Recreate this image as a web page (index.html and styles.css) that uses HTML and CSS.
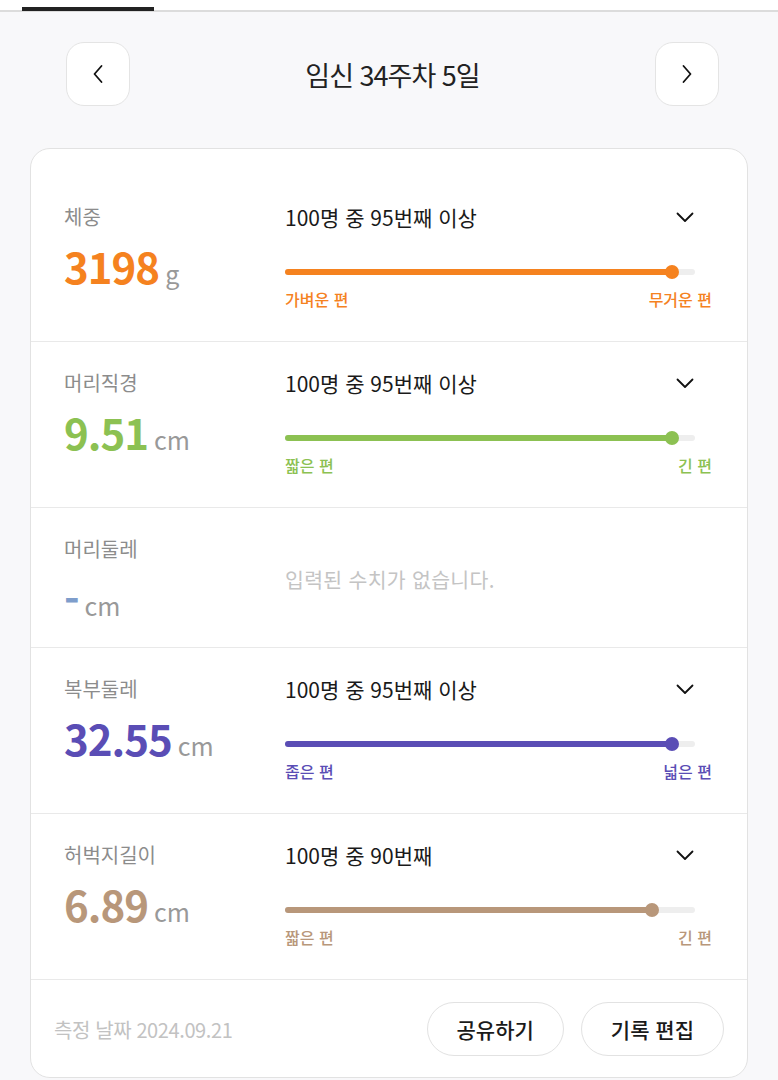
FILE: index.html
```html
<!DOCTYPE html>
<html lang="ko">
<head>
    <meta charset="utf-8">
    <title>태아 성장 기록</title>
    <link rel="stylesheet" href="styles.css">
</head>
<body>
    <div class="tabs">
        <div class="tab-active"></div>
    </div>

    <div class="week-nav">
        <button class="nav-btn" aria-label="이전 주">
            <svg width="14" height="22" viewBox="0 0 14 22"><path d="M10.5 3 L3.5 11 L10.5 19" fill="none" stroke="#111" stroke-width="1.8" stroke-linecap="round" stroke-linejoin="round"/></svg>
        </button>
        <div class="week-title">임신 34주차 5일</div>
        <button class="nav-btn" aria-label="다음 주">
            <svg width="14" height="22" viewBox="0 0 14 22"><path d="M3.5 3 L10.5 11 L3.5 19" fill="none" stroke="#111" stroke-width="1.8" stroke-linecap="round" stroke-linejoin="round"/></svg>
        </button>
    </div>

    <div class="card">
        <div class="row">
            <div class="left">
                <div class="label">체중</div>
                <div class="value orange"><span class="num">3198</span><span class="unit">g</span></div>
            </div>
            <div class="right">
                <div class="rank">
                    <span>100명 중 95번째 이상</span>
                    <svg class="chev" width="18" height="11" viewBox="0 0 18 11"><path d="M1.5 1.5 L9 9 L16.5 1.5" fill="none" stroke="#111" stroke-width="1.8" stroke-linecap="round" stroke-linejoin="round"/></svg>
                </div>
                <div class="track"><div class="fill bg-orange" style="width: 94.5%"><span class="knob bg-orange"></span></div></div>
                <div class="ends orange"><span>가벼운 편</span><span>무거운 편</span></div>
            </div>
        </div>

        <div class="row">
            <div class="left">
                <div class="label">머리직경</div>
                <div class="value green"><span class="num">9.51</span><span class="unit">cm</span></div>
            </div>
            <div class="right">
                <div class="rank">
                    <span>100명 중 95번째 이상</span>
                    <svg class="chev" width="18" height="11" viewBox="0 0 18 11"><path d="M1.5 1.5 L9 9 L16.5 1.5" fill="none" stroke="#111" stroke-width="1.8" stroke-linecap="round" stroke-linejoin="round"/></svg>
                </div>
                <div class="track"><div class="fill bg-green" style="width: 94.5%"><span class="knob bg-green"></span></div></div>
                <div class="ends green"><span>짧은 편</span><span>긴 편</span></div>
            </div>
        </div>

        <div class="row row-empty">
            <div class="left">
                <div class="label">머리둘레</div>
                <div class="value steel"><span class="num">-</span><span class="unit">cm</span></div>
            </div>
            <div class="right">
                <div class="empty">입력된 수치가 없습니다.</div>
            </div>
        </div>

        <div class="row">
            <div class="left">
                <div class="label">복부둘레</div>
                <div class="value purple"><span class="num">32.55</span><span class="unit">cm</span></div>
            </div>
            <div class="right">
                <div class="rank">
                    <span>100명 중 95번째 이상</span>
                    <svg class="chev" width="18" height="11" viewBox="0 0 18 11"><path d="M1.5 1.5 L9 9 L16.5 1.5" fill="none" stroke="#111" stroke-width="1.8" stroke-linecap="round" stroke-linejoin="round"/></svg>
                </div>
                <div class="track"><div class="fill bg-purple" style="width: 94.5%"><span class="knob bg-purple"></span></div></div>
                <div class="ends purple"><span>좁은 편</span><span>넓은 편</span></div>
            </div>
        </div>

        <div class="row">
            <div class="left">
                <div class="label">허벅지길이</div>
                <div class="value brown"><span class="num">6.89</span><span class="unit">cm</span></div>
            </div>
            <div class="right">
                <div class="rank">
                    <span>100명 중 90번째</span>
                    <svg class="chev" width="18" height="11" viewBox="0 0 18 11"><path d="M1.5 1.5 L9 9 L16.5 1.5" fill="none" stroke="#111" stroke-width="1.8" stroke-linecap="round" stroke-linejoin="round"/></svg>
                </div>
                <div class="track"><div class="fill bg-brown" style="width: 89.5%"><span class="knob bg-brown"></span></div></div>
                <div class="ends brown"><span>짧은 편</span><span>긴 편</span></div>
            </div>
        </div>

        <div class="card-footer">
            <div class="date">측정 날짜 2024.09.21</div>
            <div class="actions">
                <button class="pill">공유하기</button>
                <button class="pill">기록 편집</button>
            </div>
        </div>
    </div>
</body>
</html>
```

FILE: styles.css
```css
body {
    margin: 0;
    background-color: #f8f8fa;
    color: #1a1a1a;
    font-family: "Noto Sans CJK KR", "Noto Sans", sans-serif;
}

.tabs {
    display: flex;
    align-items: flex-end;
    height: 10px;
    background-color: #fff;
    border-bottom: 2px solid #dcdcdc;
}

.tab-active {
    width: 132px;
    height: 4px;
    margin-left: 22px;
    margin-bottom: -1px;
    background-color: #222;
}

.week-nav {
    display: flex;
    justify-content: space-between;
    align-items: center;
    padding: 30px 59px 42px 66px;
}

.nav-btn {
    display: flex;
    justify-content: center;
    align-items: center;
    width: 64px;
    height: 64px;
    padding: 0;
    background-color: #fff;
    border: 1px solid #e4e4e4;
    border-radius: 18px;
}

.week-title {
    font-size: 27px;
    letter-spacing: -1px;
    color: #222;
}

.card {
    margin: 0 30px;
    padding-top: 27px;
    background-color: #fff;
    border: 1px solid #e2e2e2;
    border-radius: 20px;
}

.row {
    display: flex;
    padding: 27px 0 24px 33px;
    border-bottom: 1px solid #e9e9e9;
}

.left {
    width: 221px;
    flex-shrink: 0;
}

.label {
    font-size: 20px;
    line-height: 28px;
    color: #8c8c8c;
}

.value {
    display: flex;
    align-items: baseline;
    gap: 6px;
    margin-top: 10px;
    height: 50px;
    line-height: 50px;
}

.num {
    font-size: 42px;
    font-weight: 700;
    letter-spacing: -1px;
}

.unit {
    font-size: 25px;
    color: #999;
}

.right {
    flex: 1;
    padding-right: 35px;
    padding-bottom: 7px;
}

.rank {
    display: flex;
    justify-content: space-between;
    align-items: center;
    font-size: 21px;
    line-height: 28px;
    color: #1a1a1a;
}

.chev {
    margin-right: 18px;
}

.track {
    height: 6px;
    margin-top: 38px;
    margin-right: 17px;
    background-color: #eee;
    border-radius: 3px;
}

.fill {
    position: relative;
    height: 100%;
    border-radius: 3px;
}

.knob {
    position: absolute;
    right: -7px;
    top: -4px;
    width: 14px;
    height: 14px;
    border-radius: 50%;
}

.ends {
    display: flex;
    justify-content: space-between;
    margin-top: 13px;
    font-size: 16px;
    font-weight: 500;
    line-height: 22px;
}

.row-empty .right {
    display: flex;
    align-items: center;
    padding-bottom: 0;
}

.empty {
    font-size: 20.5px;
    letter-spacing: 0.3px;
    color: #c4c4c4;
}

.orange { color: #f5821f; }
.green { color: #8cc152; }
.steel { color: #7e9dcb; }
.purple { color: #5a4db5; }
.brown { color: #b8977a; }

.bg-orange { background-color: #f5821f; }
.bg-green { background-color: #8cc152; }
.bg-purple { background-color: #5a4db5; }
.bg-brown { background-color: #b8977a; }

.card-footer {
    display: flex;
    justify-content: space-between;
    align-items: center;
    padding: 22px 23px 21px 23px;
}

.date {
    font-size: 20px;
    letter-spacing: -0.4px;
    color: #c2c2c2;
}

.actions {
    display: flex;
    gap: 17px;
}

.pill {
    height: 54px;
    padding: 0 29px;
    font-family: inherit;
    font-size: 21px;
    font-weight: 500;
    color: #1a1a1a;
    background-color: #fff;
    border: 1.5px solid #e2e2e2;
    border-radius: 27px;
}
```
